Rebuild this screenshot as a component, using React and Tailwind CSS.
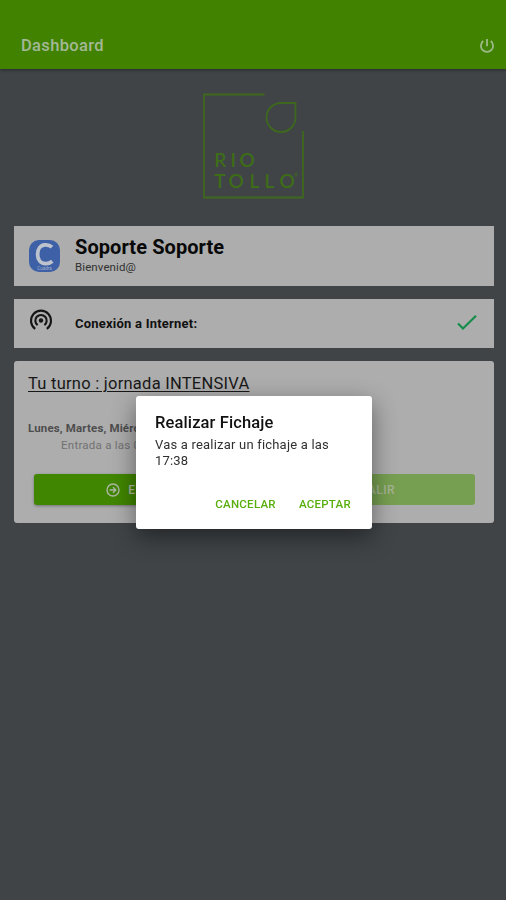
import { useState } from 'react';

const days = ['Lunes', 'Martes', 'Miércoles', 'Jueves', 'Viernes'];

const Header = () => (
    <header className="h-[69px] shrink-0 bg-[#418200] flex items-end justify-between pl-[21px] pr-[11px] pb-[11px] shadow-[0_1px_3px_rgba(0,0,0,0.4)]">
        <h1 className="text-[16.5px] leading-6 font-medium tracking-[0.35px] text-[#a3b896]">Dashboard</h1>
        <button aria-label="Salir" className="h-6 flex items-center text-[#9dbb88]">
            <svg width="16" height="16" viewBox="0 0 16 16" fill="none" stroke="currentColor" strokeWidth="1.8">
                <path d="M8 1v7.3M4.2 3a6.1 6.1 0 1 0 7.6 0" />
            </svg>
        </button>
    </header>
);

const Logo = () => (
    <svg className="block mx-auto relative -left-px" width="102" height="106" viewBox="0 0 102 106" fill="none" stroke="#3e681d" strokeWidth="1.8">
        <path d="M62.5 1.5H2v103h99V38" />
        <path d="M93.5 10H79a14.5 14.5 0 1 0 14.5 14.5Z" />
        <g fill="#3e6d18" stroke="none" className="font-['Lato']" fontWeight="600">
            <text x="12.3 28.5 37.5" y="74.3" fontSize="19">RIO</text>
            <text x="12.3 26.5 47.5 62.5 77.5" y="95.3" fontSize="19">TOLLO</text>
            <text x="92" y="84" fontSize="5">®</text>
        </g>
    </svg>
);

const UserCard = () => (
    <section className="h-[60px] bg-[#adadad] flex items-center pl-[15px]">
        <div className="w-[31px] h-[32px] rounded-[10px] bg-[#3d60a6] flex justify-center overflow-hidden">
            <svg width="31" height="32" viewBox="0 0 31 32" fill="none">
                <path d="M23 7.2C20.5 4.9 17.8 4.7 15.8 4.9C11.3 5.3 8.6 9.2 8.6 14.2C8.6 19.5 11.6 23.4 16.3 23.7C18.8 23.8 21.2 23.1 23.3 21.3" stroke="#bdc3cd" strokeWidth="3.8" />
                <text x="15.5" y="30" textAnchor="middle" fontSize="4.5" fill="#a5b1ca">Cuadra</text>
            </svg>
        </div>
        <div className="ml-[15px]">
            <h2 className="text-[20px] leading-[23px] font-bold tracking-[0.08px] text-[#090909]">Soporte Soporte</h2>
            <p className="text-[11.5px] leading-[17px] tracking-[0.1px] text-[#303030]">Bienvenid@</p>
        </div>
    </section>
);

const ConnectionCard = () => (
    <section className="h-[49px] mt-[13px] bg-[#adadad] flex items-center pl-[15px] pr-[16px]">
        <svg className="-mt-[8px]" width="24" height="24" viewBox="0 0 24 24" fill="none" stroke="#151515" strokeWidth="2.1">
            <circle cx="12" cy="12.5" r="2.2" fill="#151515" stroke="none" />
            <path d="M8.6 17.2a5.7 5.7 0 1 1 6.8 0" />
            <path d="M6.2 20.8a10 10 0 1 1 11.6 0" />
        </svg>
        <p className="ml-[22px] text-[13px] font-bold tracking-[0.22px] text-[#111]">Conexión a Internet:</p>
        <svg className="ml-auto -mt-[2px]" width="22" height="18" viewBox="0 0 22 18" fill="none" stroke="#138d49" strokeWidth="2.2">
            <path d="M2 9.5l5 5L20 1.8" />
        </svg>
    </section>
);

const ShiftCard = ({ onCheck }) => (
    <section className="h-[162px] mt-[13px] rounded-[3px] bg-[#adadad] px-[14px] pt-[12px]">
        <h2 className="text-[16.5px] leading-[22px] tracking-[0.25px] text-[#181818] underline decoration-1 underline-offset-2">Tu turno : jornada INTENSIVA</h2>
        <p className="mt-[25px] text-[11.5px] leading-4 font-bold tracking-[0.15px] text-[#4d4d4d] whitespace-nowrap">{days.join(', ')}</p>
        <p className="mt-[1px] pl-[33px] text-[11.5px] leading-4 tracking-[0.25px] text-[#717171]">Entrada a las 09:00</p>
        <div className="mt-[21px] mx-[5.5px] grid grid-cols-2 gap-[9px] text-[12px] font-medium tracking-[0.5px]">
            <button onClick={onCheck} className="h-[31px] rounded-[3px] bg-[#418600] text-[#adb8a2] flex items-center justify-center gap-[8px] shadow-[0_1px_3px_rgba(0,0,0,0.35)]">
                <svg width="14" height="14" viewBox="0 0 14 14" fill="none" stroke="currentColor" strokeWidth="1.4">
                    <circle cx="7" cy="7" r="6" />
                    <path d="M3.5 7h6M7 4.2L9.8 7 7 9.8" />
                </svg>
                ENTRAR
            </button>
            <button disabled className="h-[31px] rounded-[3px] bg-[#779f51] text-[#a5b491] flex items-center justify-center gap-[8px]">
                <svg width="14" height="14" viewBox="0 0 14 14" fill="none" stroke="currentColor" strokeWidth="1.4">
                    <path d="M8.5 2.5H1.5v9h7M5 7h7.5M10 4.2L12.8 7 10 9.8" />
                </svg>
                SALIR
            </button>
        </div>
    </section>
);

const Dialog = ({ onClose }) => (
    <div className="fixed inset-0 flex justify-center pt-[396px] pl-[2px]">
        <div role="dialog" className="w-[236px] h-[133px] rounded-[3px] bg-white px-[19px] pt-[16px] shadow-[0_8px_24px_rgba(0,0,0,0.45)]">
            <h3 className="text-[16.5px] leading-[21px] font-medium tracking-[0.12px] text-[#111]">Realizar Fichaje</h3>
            <p className="mt-[4px] text-[13px] leading-[16px] tracking-[0.2px] text-[#303030]">Vas a realizar un fichaje a las 17:38</p>
            <div className="mt-[27px] mr-[2px] flex justify-end gap-[23px] text-[11.5px] leading-4 font-medium tracking-[0.27px] text-[#58ae0c]">
                <button onClick={onClose}>CANCELAR</button>
                <button onClick={onClose}>ACEPTAR</button>
            </div>
        </div>
    </div>
);

const App = () => {
    const [open, setOpen] = useState(true);

    return (
        <div className="min-h-screen flex flex-col bg-[#404447] font-['Roboto',sans-serif]">
            <Header />
            <main className="pt-[24px] pl-[14px] pr-[12px]">
                <Logo />
                <div className="mt-[27px]">
                    <UserCard />
                    <ConnectionCard />
                    <ShiftCard onCheck={() => setOpen(true)} />
                </div>
            </main>
            {open && <Dialog onClose={() => setOpen(false)} />}
        </div>
    );
};

export default App;
